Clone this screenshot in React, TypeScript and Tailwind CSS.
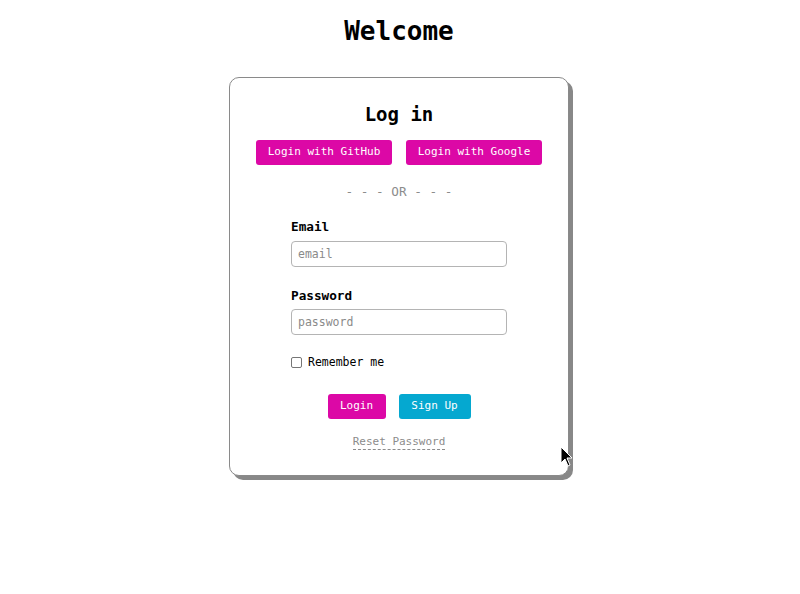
export default function App() {
  return (
    <div className="relative w-[800px] h-[594px] bg-white font-['DejaVu_Sans_Mono',monospace] text-black">
      <div className="flex flex-col items-center pr-[2px]">
        <h1 className="mt-[16px] text-[26px] font-bold leading-[30px]">Welcome</h1>

        <div className="mt-[31px] w-[340px] h-[399px] rounded-[10px] border border-[#8a8a8a] bg-white shadow-[4px_4px_0_#888] flex flex-col items-center">
          <h2 className="mt-[24px] text-[19px] font-bold leading-[24px]">Log in</h2>

          <div className="mt-[14px] flex gap-[14px]">
            <button className="h-[25px] w-[136px] rounded-[3px] bg-[#dc08a6] text-white text-[11px]">
              Login with GitHub
            </button>
            <button className="h-[25px] w-[136px] rounded-[3px] bg-[#dc08a6] text-white text-[11px]">
              Login with Google
            </button>
          </div>

          <div className="mt-[19px] text-[12.7px] text-[#8c8c8c] leading-[16px]">- - - OR - - -</div>

          <div className="mt-[19px] w-[216px] flex flex-col">
            <label className="text-[12.7px] font-bold leading-[16px]">Email</label>
            <input
              placeholder="email"
              className="mt-[6px] h-[26px] w-full rounded-[4px] border border-[#b4b4b4] px-[6px] text-[11.5px] placeholder:text-[#8a8a8a] outline-none"
            />

            <label className="mt-[21px] text-[12.7px] font-bold leading-[16px]">Password</label>
            <input
              placeholder="password"
              className="mt-[5px] h-[26px] w-full rounded-[4px] border border-[#b4b4b4] px-[6px] text-[11.5px] placeholder:text-[#8a8a8a] outline-none"
            />

            <label className="mt-[20px] flex items-center gap-[6px] text-[11.5px] leading-[14px]">
              <span className="w-[11px] h-[11px] rounded-[2px] border border-[#767676] bg-white" />
              Remember me
            </label>
          </div>

          <div className="mt-[25px] flex gap-[13px]">
            <button className="h-[25px] w-[58px] rounded-[3px] bg-[#dc08a6] text-white text-[11px]">Login</button>
            <button className="h-[25px] w-[72px] rounded-[3px] bg-[#05a8d0] text-white text-[11px]">Sign Up</button>
          </div>

          <a className="mt-[16px] text-[11px] leading-[14px] text-[#8c8c8c] border-b border-dashed border-[#8c8c8c]">
            Reset Password
          </a>
        </div>
      </div>

      <svg className="absolute left-[560px] top-[446px]" width="14" height="22" viewBox="0 0 14 22">
        <path d="M1 1 L1 17 L5 13 L8 20 L10 19 L7 12 L12 12 Z" fill="black" stroke="white" strokeWidth="1" />
      </svg>
    </div>
  );
}
